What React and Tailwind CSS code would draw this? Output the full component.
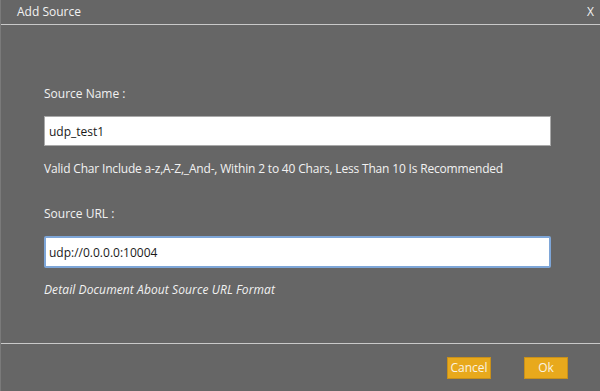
export default function App() {
  return (
    <div className="w-[600px] h-[391px] bg-[#666666] border-l border-[#7a7a7a] flex flex-col font-['Open_Sans',sans-serif] text-[#f2f2f2]">
      <div className="h-[24px] flex items-center justify-between pl-[16px] pr-[6px] text-[12px]">
        <span>Add Source</span>
        <span>X</span>
      </div>
      <div className="h-px bg-[#c9c9c9]" />
      <div className="flex-1 flex flex-col pl-[43px] pr-[49px] pt-[61px] text-[12px]">
        <p className="leading-[16px]">Source Name :</p>
        <input
          defaultValue="udp_test1"
          className="mt-[14px] h-[30px] bg-white border border-[#a9a9a9] px-[4px] text-[#1a1a1a] text-[12px] outline-none"
        />
        <p className="mt-[15px] leading-[16px] tracking-[-0.18px]">Valid Char Include a-z,A-Z,_And-, Within 2 to 40 Chars, Less Than 10 Is Recommended</p>
        <p className="mt-[29px] leading-[16px]">Source URL :</p>
        <input
          defaultValue="udp://0.0.0.0:10004"
          className="mt-[14px] h-[32px] bg-white border-2 border-[#7ea6d8] rounded-[2px] px-[3px] text-[#1a1a1a] text-[12px] outline-none"
        />
        <p className="mt-[14px] leading-[16px] italic tracking-[0.1px]">Detail Document About Source URL Format</p>
      </div>
      <div className="h-px bg-[#c9c9c9]" />
      <div className="h-[47px] flex items-center justify-end pr-[32px] gap-[33px] text-[12px]">
        <button className="w-[44px] h-[22px] bg-[#e8a91c] border border-[#c8901a] text-[#fbf3e0]">Cancel</button>
        <button className="w-[44px] h-[22px] bg-[#e8a91c] border border-[#c8901a] text-[#fbf3e0]">Ok</button>
      </div>
    </div>
  )
}
